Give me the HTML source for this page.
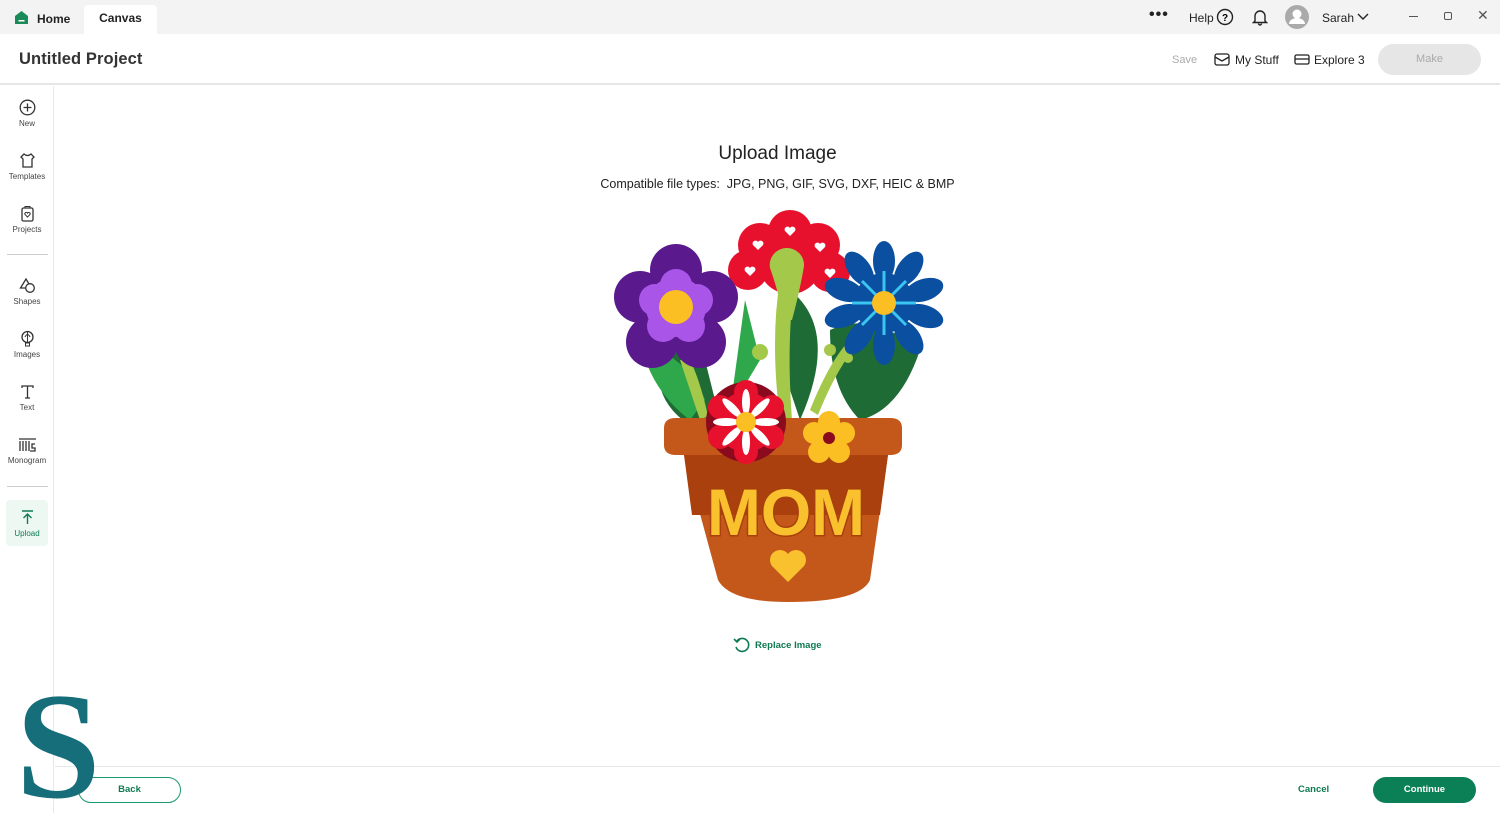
<!DOCTYPE html>
<html style="overflow:hidden"><head><meta charset="utf-8"><style>
*{box-sizing:border-box;margin:0;padding:0}
html,body{width:1500px;height:813px;overflow:hidden}
body{background:#fff;font-family:"Liberation Sans",sans-serif;color:#222;position:relative}
.abs{position:absolute}
.top{left:0;top:0;width:1500px;height:34px;background:#f3f3f3}
.tab{top:5px;left:84px;width:73px;height:29px;background:#fff;border-radius:4px 4px 0 0;font-size:12px;font-weight:bold;text-align:center;line-height:27px}
.hdr{top:34px;left:0;width:1500px;height:51px;background:#fff;border-bottom:2px solid #e6e6e6}
.side{top:86px;left:0;width:54px;height:727px;border-right:1px solid #e8e8e8}
.si{left:0;width:54px;text-align:center;font-size:8px;color:#444}
.si svg{display:block;margin:0 auto 3px}
.t12{font-size:12px}
</style></head><body>
<div class="abs top"></div>
<svg class="abs" style="left:14px;top:10px" width="15" height="15" viewBox="0 0 15 15"><path d="M1 6 L7.5 1 L14 6 V14 H1Z" fill="#1a8a5a"/><rect x="4.5" y="10" width="6" height="1.5" fill="#fff"/></svg>
<div class="abs t12" style="left:37px;top:12px;font-weight:bold">Home</div>
<div class="abs tab">Canvas</div>
<div class="abs" style="left:1149px;top:6px;font-size:16px;font-weight:bold;letter-spacing:1px">•••</div>
<div class="abs t12" style="left:1189px;top:11px">Help</div>
<svg class="abs" style="left:1216px;top:8px" width="18" height="18" viewBox="0 0 18 18"><circle cx="9" cy="9" r="7.5" fill="none" stroke="#222" stroke-width="1.4"/><text x="9" y="13" font-size="10" text-anchor="middle" font-family="Liberation Sans" font-weight="bold">?</text></svg>
<svg class="abs" style="left:1251px;top:8px" width="18" height="18" viewBox="0 0 18 18"><path d="M4 13 V8 a5 5 0 0 1 10 0 V13 L15.5 14.5 H2.5Z M7.5 15.5 a1.5 1.5 0 0 0 3 0" fill="none" stroke="#222" stroke-width="1.4"/></svg>
<svg class="abs" style="left:1285px;top:5px" width="24" height="24" viewBox="0 0 24 24"><circle cx="12" cy="12" r="12" fill="#aaa"/><circle cx="12" cy="9" r="4.5" fill="#fff"/><path d="M4 19 a8 6 0 0 1 16 0" fill="#fff"/></svg>
<div class="abs t12" style="left:1322px;top:11px">Sarah</div>
<svg class="abs" style="left:1357px;top:12px" width="12" height="10"><path d="M1 2 L6 7 L11 2" fill="none" stroke="#222" stroke-width="1.4"/></svg>
<div class="abs" style="left:1409px;top:16px;width:9px;height:1px;background:#555"></div>
<div class="abs" style="left:1444px;top:12px;width:8px;height:8px;border:1.5px solid #555;border-radius:2px"></div>
<div class="abs" style="left:1477px;top:7px;font-size:14px;color:#555">✕</div>

<div class="abs hdr"></div>
<div class="abs" style="left:19px;top:50px;font-size:16.5px;font-weight:bold;color:#333;letter-spacing:0.1px">Untitled Project</div>
<div class="abs" style="left:1172px;top:54px;font-size:11px;color:#aaa">Save</div>
<svg class="abs" style="left:1214px;top:53px" width="16" height="13"><rect x="1" y="1" width="14" height="11" rx="2" fill="none" stroke="#222" stroke-width="1.3"/><path d="M1 4 L8 8 L15 4" fill="none" stroke="#222" stroke-width="1.3"/></svg>
<div class="abs t12" style="left:1235px;top:53px">My Stuff</div>
<svg class="abs" style="left:1294px;top:54px" width="16" height="11"><rect x="1" y="1" width="14" height="9" rx="1.5" fill="none" stroke="#222" stroke-width="1.3"/><path d="M1 5 H15" stroke="#222" stroke-width="1.3"/></svg>
<div class="abs t12" style="left:1314px;top:53px">Explore 3</div>
<div class="abs" style="left:1378px;top:44px;width:103px;height:31px;border-radius:16px;background:#e6e6e6;color:#aaa;font-size:11px;text-align:center;line-height:31px">Make</div>

<div class="abs side"></div>
<div class="abs si" style="top:99px"><svg width="17" height="17"><circle cx="8.5" cy="8.5" r="7.3" fill="none" stroke="#333" stroke-width="1.3"/><path d="M8.5 4.5v8M4.5 8.5h8" stroke="#333" stroke-width="1.3"/></svg>New</div>
<div class="abs si" style="top:152px"><svg width="17" height="17"><path d="M5 2 L2 5 L4 7 V15 H13 V7 L15 5 L12 2 Q8.5 5 5 2Z" fill="none" stroke="#333" stroke-width="1.3"/></svg>Templates</div>
<div class="abs si" style="top:205px"><svg width="17" height="17"><rect x="3" y="3" width="11" height="13" rx="1.5" fill="none" stroke="#333" stroke-width="1.3"/><path d="M6 3V1.5h5V3" fill="none" stroke="#333"/><path d="M8.5 12 L6 9.5 a1.3 1.3 0 0 1 2.5 -1.3 a1.3 1.3 0 0 1 2.5 1.3Z" fill="none" stroke="#333"/></svg>Projects</div>
<div class="abs" style="left:7px;top:254px;width:41px;height:1px;background:#ccc"></div>
<div class="abs si" style="top:277px"><svg width="17" height="17"><path d="M7 2 L1.5 11 H12.5Z" fill="none" stroke="#333" stroke-width="1.3"/><circle cx="11" cy="11" r="4.3" fill="#fff" stroke="#333" stroke-width="1.3"/></svg>Shapes</div>
<div class="abs si" style="top:330px"><svg width="17" height="17"><circle cx="8.5" cy="7" r="5.5" fill="none" stroke="#333" stroke-width="1.3"/><path d="M6 7 Q8.5 2 11 7 M8.5 2v10" fill="none" stroke="#333"/><rect x="6.5" y="13" width="4" height="3" fill="none" stroke="#333"/></svg>Images</div>
<div class="abs si" style="top:383px"><svg width="17" height="17"><path d="M3 5V3h11v2M8.5 3v12M6 15h5" fill="none" stroke="#333" stroke-width="1.3"/></svg>Text</div>
<div class="abs si" style="top:436px"><svg width="19" height="17"><path d="M1 3h17M2 5v10M5 5v10M8 5v10M11 5v10M17 8h-3v4h3v3h-5" fill="none" stroke="#333" stroke-width="1.3"/></svg>Monogram</div>
<div class="abs" style="left:7px;top:486px;width:41px;height:1px;background:#ccc"></div>
<div class="abs" style="left:6px;top:500px;width:42px;height:46px;background:#eef8f3;border-radius:4px"></div>
<div class="abs si" style="top:509px;color:#0f7a52"><svg width="17" height="17"><path d="M3 2h11M8.5 15V5M4.5 9l4-4 4 4" fill="none" stroke="#0f7a52" stroke-width="1.4"/></svg>Upload</div>

<div class="abs" style="left:0;top:143px;width:1555px;text-align:center;font-size:19px;color:#222">Upload Image</div>
<div class="abs" style="left:0;top:177px;width:1555px;text-align:center;font-size:12.5px;color:#222">Compatible file types:&nbsp; JPG, PNG, GIF, SVG, DXF, HEIC &amp; BMP</div>

<svg class="abs" style="left:600px;top:200px" width="360" height="410" viewBox="600 200 360 410">
<defs><path id="ht" d="M0 4 L-5 -1 a2.8 2.8 0 0 1 5 -3 a2.8 2.8 0 0 1 5 3Z" fill="#fff"/></defs>
<g>
<path d="M660 350 Q650 400 690 425 L720 420 L700 340Z" fill="#1e6b35"/>
<path d="M745 300 L760 360 L730 410 Z" fill="#2ea84a"/>
<path d="M790 290 Q840 330 800 420 L780 360Z" fill="#1e6b35"/>
<path d="M830 330 Q870 310 920 350 Q900 410 860 420 Q830 390 830 330Z" fill="#1e6b35"/>
<path d="M640 340 Q690 360 705 400 L690 420 Q650 390 640 340Z" fill="#2ea84a"/>
<path d="M780 280 Q770 340 780 420 L792 420 Q786 340 795 280Z" fill="#a4c84a"/>
<path d="M680 360 Q690 390 700 420 L708 416 Q700 380 690 360Z" fill="#a4c84a"/>
<path d="M810 410 Q830 360 850 340 L856 346 Q836 370 818 415Z" fill="#a4c84a"/>
<circle cx="760" cy="352" r="8" fill="#a4c84a"/><circle cx="830" cy="350" r="6" fill="#a4c84a"/><circle cx="848" cy="358" r="5" fill="#a4c84a"/>
</g>
<g fill="#e8112d">
<circle cx="790" cy="262" r="32"/><circle cx="760" cy="245" r="22"/><circle cx="790" cy="232" r="22"/><circle cx="818" cy="245" r="22"/><circle cx="748" cy="270" r="20"/><circle cx="830" cy="272" r="20"/>
</g>
<use href="#ht" x="790" y="232"/><use href="#ht" x="758" y="246"/><use href="#ht" x="820" y="248"/><use href="#ht" x="750" y="272"/><use href="#ht" x="830" y="274"/>
<path d="M786 248 a17 17 0 0 1 18 18 Q800 290 792 320 H784 Q778 290 770 268 a17 17 0 0 1 16 -20Z" fill="#a4c84a"/>
<g fill="#5a1a8e"><circle cx="676" cy="307" r="42"/><circle cx="676" cy="270" r="26"/><circle cx="712" cy="297" r="26"/><circle cx="700" cy="342" r="26"/><circle cx="652" cy="342" r="26"/><circle cx="640" cy="297" r="26"/></g>
<g fill="#a855e8"><circle cx="676" cy="307" r="30"/><circle cx="676" cy="285" r="16"/><circle cx="697" cy="300" r="16"/><circle cx="689" cy="326" r="16"/><circle cx="663" cy="326" r="16"/><circle cx="655" cy="300" r="16"/></g>
<circle cx="676" cy="307" r="17" fill="#fbbf24"/>
<g transform="translate(884 303)" fill="#0b4fa0">
<circle r="30"/>
<g id="bp"><ellipse cx="0" cy="-42" rx="11" ry="20"/></g>
<use href="#bp" transform="rotate(36)"/><use href="#bp" transform="rotate(72)"/><use href="#bp" transform="rotate(108)"/><use href="#bp" transform="rotate(144)"/><use href="#bp" transform="rotate(180)"/><use href="#bp" transform="rotate(216)"/><use href="#bp" transform="rotate(252)"/><use href="#bp" transform="rotate(288)"/><use href="#bp" transform="rotate(324)"/>
<g stroke="#3ac6f0" stroke-width="3"><path d="M0 -10V-32M0 10V32M-10 0H-32M10 0H32M7 7L22 22M-7 -7L-22 -22M7 -7L22 -22M-7 7L-22 22"/></g>
<circle r="12" fill="#fbbf24"/>
</g>
<path d="M664 428 Q664 418 676 418 H890 Q902 418 902 428 V445 Q902 455 890 455 H676 Q664 455 664 445Z" fill="#c4581a"/>
<path d="M684 455 H888 L870 580 Q860 602 788 602 Q730 602 718 580Z" fill="#c4581a"/>
<path d="M684 455 H888 L880 515 H692Z" fill="#a9400d"/>
<text x="786" y="535" text-anchor="middle" font-family="Liberation Sans" font-weight="bold" font-size="66" fill="#f9c12e" stroke="#a9400d" stroke-width="3" paint-order="stroke" textLength="158" lengthAdjust="spacingAndGlyphs">MOM</text>
<path d="M788 582 L772 566 a9 9 0 0 1 16 -12 a9 9 0 0 1 16 12Z" fill="#f9c12e"/>
<g transform="translate(746 422)">
<g fill="#8b0a1e"><circle r="40"/></g>
<g fill="#e8112d"><circle r="30"/><circle cx="0" cy="-30" r="12"/><circle cx="26" cy="-15" r="12"/><circle cx="26" cy="15" r="12"/><circle cx="0" cy="30" r="12"/><circle cx="-26" cy="15" r="12"/><circle cx="-26" cy="-15" r="12"/></g>
<g fill="#fff"><ellipse cx="0" cy="-20" rx="4" ry="13"/><ellipse cx="0" cy="20" rx="4" ry="13"/><ellipse cx="20" cy="0" rx="13" ry="4"/><ellipse cx="-20" cy="0" rx="13" ry="4"/><ellipse cx="14" cy="14" rx="4" ry="13" transform="rotate(-45 14 14)"/><ellipse cx="-14" cy="-14" rx="4" ry="13" transform="rotate(-45 -14 -14)"/><ellipse cx="14" cy="-14" rx="4" ry="13" transform="rotate(45 14 -14)"/><ellipse cx="-14" cy="14" rx="4" ry="13" transform="rotate(45 -14 14)"/></g>
<circle r="10" fill="#fbbf24"/>
</g>
<g transform="translate(829 438)" fill="#fbbf24"><circle r="14"/><circle cy="-16" r="11"/><circle cx="15" cy="-5" r="11"/><circle cx="10" cy="14" r="11"/><circle cx="-10" cy="14" r="11"/><circle cx="-15" cy="-5" r="11"/><circle r="6" fill="#8b0a1e"/></g>
</svg>

<svg class="abs" style="left:733px;top:636px" width="18" height="17"><path d="M4 5 A6.5 6.5 0 1 1 3 11" fill="none" stroke="#0f7a52" stroke-width="1.6"/><path d="M1 3 L4 6 L7 3" fill="none" stroke="#0f7a52" stroke-width="1.6"/></svg>
<div class="abs" style="left:755px;top:640px;font-size:9.5px;font-weight:bold;color:#0f7a52">Replace Image</div>

<div class="abs" style="left:55px;top:766px;width:1445px;height:1px;background:#e8e8e8"></div>
<div class="abs" style="left:78px;top:777px;width:103px;height:26px;border:1.5px solid #1a9a6a;border-radius:13px;text-align:center;line-height:23px;font-size:9.5px;font-weight:bold;color:#0f7a52">Back</div>
<div class="abs" style="left:1298px;top:784px;font-size:9.5px;font-weight:bold;color:#0f7a52">Cancel</div>
<div class="abs" style="left:1373px;top:777px;width:103px;height:26px;background:#0b7f55;border-radius:13px;text-align:center;line-height:26px;font-size:9.5px;font-weight:bold;color:#fff">Continue</div>

<svg class="abs" style="left:0;top:660px" width="130" height="150" viewBox="0 660 130 150"><text x="16" y="797" font-family="Liberation Serif" font-weight="bold" font-size="152" fill="#166e7a">S</text></svg>
</body></html>
